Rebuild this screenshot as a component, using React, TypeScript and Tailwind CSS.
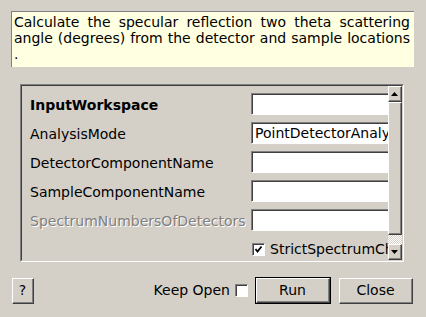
import { ReactNode } from 'react';

const FONT = "font-['DejaVu_Sans',_'Liberation_Sans',_sans-serif]";

function Raised({ children, className = '' }: { children?: ReactNode; className?: string }) {
  // classic win/qt raised bevel
  return (
    <div className={`border-t border-l border-white border-b border-r border-b-[#404040] border-r-[#404040] bg-[#d4d0c8] ${className}`}>
      <div className="w-full h-full border-b border-r border-[#808080] flex items-center justify-center">
        {children}
      </div>
    </div>
  );
}

function TextInput({ value }: { value?: string }) {
  return (
    <div className="h-[22px] w-[150px] shrink-0 bg-white border-t border-l border-[#808080] border-b border-r border-b-white border-r-white shadow-[inset_1px_1px_0_#404040] pl-[3px] flex items-center overflow-hidden whitespace-nowrap">
      {value}
    </div>
  );
}

function Checkbox({ checked }: { checked?: boolean }) {
  return (
    <div className="w-[13px] h-[13px] shrink-0 bg-white border-t border-l border-[#808080] border-b border-r border-b-white border-r-white shadow-[inset_1px_1px_0_#404040] flex items-center justify-center">
      {checked && (
        <svg width="9" height="9" viewBox="0 0 9 9">
          <path d="M1.5 4 L3.5 6.5 L7.5 1.5" stroke="#000" strokeWidth="1.8" fill="none" />
        </svg>
      )}
    </div>
  );
}

function Arrow({ up }: { up?: boolean }) {
  return (
    <svg width="7" height="4" viewBox="0 0 7 4">
      <path d={up ? 'M0 4 L3.5 0 L7 4 Z' : 'M0 0 L3.5 4 L7 0 Z'} fill="#000" />
    </svg>
  );
}

const rows = [
  { label: 'InputWorkspace', bold: true },
  { label: 'AnalysisMode', value: 'PointDetectorAnalysis' },
  { label: 'DetectorComponentName' },
  { label: 'SampleComponentName' },
  { label: 'SpectrumNumbersOfDetectors', disabled: true },
];

export default function App() {
  return (
    <div className={`w-[426px] h-[317px] bg-[#d4d0c8] text-[14px] text-black ${FONT} px-[11px] pt-[11px] overflow-hidden`}>
      {/* description */}
      <div className="w-[403px] h-[56px] bg-[#ffffe1] border-t border-l border-[#808080] pl-[2px] pr-[4px] pt-[2px] leading-[16px] text-justify">
        Calculate the specular reflection two theta scattering angle (degrees) from the detector and sample locations .
      </div>

      {/* property panel */}
      <div className="ml-[9px] mt-[17px] w-[384px] h-[178px] border-t border-l border-[#808080] border-b border-r border-b-white border-r-white">
        <div className="w-full h-full border-t border-l border-[#404040] border-b border-r border-b-[#d4d0c8] border-r-[#d4d0c8] flex">
          <div className="flex-1 overflow-hidden pt-[7px] flex flex-col gap-[7px]">
            {rows.map((r) => (
              <div key={r.label} className="flex items-center h-[22px]">
                <div
                  className={`w-[229px] shrink-0 pl-[8px] pt-[2px] whitespace-nowrap ${r.bold ? 'font-bold' : ''} ${
                    r.disabled ? 'text-[#808080] [text-shadow:1px_1px_0_#fff]' : ''
                  }`}
                >
                  {r.label}
                </div>
                <TextInput value={r.value} />
              </div>
            ))}
            <div className="flex items-center h-[22px] pl-[230px] gap-[5px] whitespace-nowrap">
              <Checkbox checked />
              <span>StrictSpectrumChecking</span>
            </div>
          </div>

          {/* scrollbar */}
          <div className="w-[14px] shrink-0 flex flex-col">
            <Raised className="h-[16px] w-[14px]">
              <Arrow up />
            </Raised>
            <Raised className="h-[133px] w-[14px]" />
            <div className="flex-1 bg-[repeating-conic-gradient(#ffffff_0_25%,#d4d0c8_0_50%)] bg-[length:2px_2px]" />
            <Raised className="h-[16px] w-[14px]">
              <Arrow />
            </Raised>
          </div>
        </div>
      </div>

      {/* buttons */}
      <div className="mt-[15px] flex items-center pl-[1px]">
        <Raised className="w-[22px] h-[26px]">?</Raised>
        <div className="flex-1" />
        <span className="mr-[5px]">Keep Open</span>
        <Checkbox />
        <div className="ml-[7px] border border-black">
          <Raised className="w-[74px] h-[25px]">Run</Raised>
        </div>
        <Raised className="ml-[8px] mr-[2px] w-[74px] h-[26px]">Close</Raised>
      </div>
    </div>
  );
}
